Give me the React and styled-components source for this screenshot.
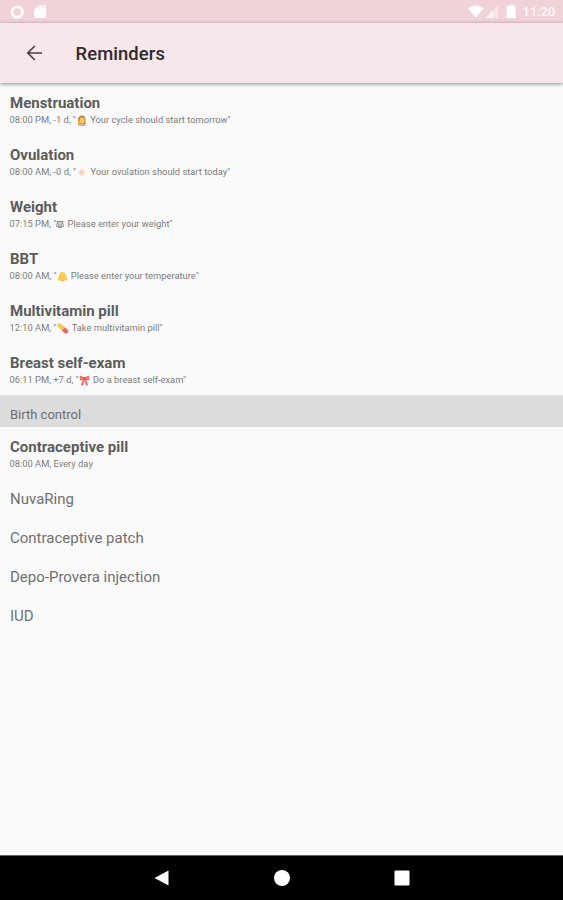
import React from "react";
import styled, { createGlobalStyle } from "styled-components";

const GlobalStyle = createGlobalStyle`
  *, *::before, *::after { box-sizing: border-box; }
  body { margin: 0; background: #fafafa; }
`;

const Screen = styled.div`
  display: flex;
  flex-direction: column;
  width: 563px;
  height: 900px;
  overflow: hidden;
  background: #fafafa;
  font-family: Roboto, "Liberation Sans", sans-serif;
`;

const StatusBar = styled.header`
  display: flex;
  justify-content: space-between;
  flex: none;
  height: 23px;
  padding: 0 8px 0 10px;
  background: #f0d2d8;
  color: #fff;
`;

const StatusGroup = styled.div`
  display: flex;
  align-items: center;
  svg { display: block; }
`;

const Clock = styled.span`
  margin-left: 6px;
  font-size: 13px;
  line-height: 24px;
  letter-spacing: -0.1px;
  font-weight: 500;
  padding-top: 1px;
  opacity: 0.85;
`;

const AppBar = styled.div`
  display: flex;
  align-items: center;
  flex: none;
  height: 60px;
  padding-left: 24px;
  background: #f8e7ea;
  box-shadow: 0 1px 4px rgba(0, 0, 0, 0.45);
  z-index: 1;
`;

const PageTitle = styled.h1`
  margin: 1px 0 0 31.5px;
  font-size: 18.4px;
  line-height: 24px;
  font-weight: 500;
  letter-spacing: 0.1px;
  color: #30292d;
`;

const List = styled.main`
  flex: 1;
  min-height: 0;
`;

const Reminder = styled.div`
  height: 52px;
  padding: 11px 10px 0;
`;

const Name = styled.div`
  font-size: 15px;
  line-height: 18px;
  font-weight: ${(p) => (p.$active ? 700 : 400)};
  color: ${(p) => (p.$active ? "#5c5c5c" : "#707070")};
  white-space: nowrap;
`;

const Details = styled.div`
  display: flex;
  align-items: center;
  height: 12px;
  margin: 2px 0 0 -0.5px;
  font-size: 9.35px;
  line-height: 12px;
  color: #7c7c7c;
  white-space: pre;
  svg { display: block; flex: none; margin-right: 1px; }
`;

const Section = styled.div`
  height: 32px;
  padding: 10px 10px 0;
  background: #dcdcdc;
  font-size: 13px;
  line-height: 19px;
  color: #6c6c6c;
`;

const Option = styled.div`
  display: flex;
  align-items: center;
  height: 39px;
  padding: 0 10px;
`;

const NavBar = styled.nav`
  display: flex;
  justify-content: center;
  align-items: center;
  gap: 104px;
  flex: none;
  height: 45px;
  background: #000;
  border-top: 1px solid #666;
  svg { display: block; }
`;

const Woman = () => (
  <svg width="11" height="11" viewBox="0 0 22 22">
    <path d="M4 20V10C4 4 7 1 12 1s7 4 7 9v8l-4 2z" fill="#b98543" />
    <ellipse cx="12" cy="11" rx="5" ry="6" fill="#f9cd5b" />
    <path d="M6 22c0-4 3-5 6-5s7 1 7 5z" fill="#e5a6a0" />
    <path d="M3 13l3-2 2 6-3 3z" fill="#f2b85c" />
  </svg>
);

const Flower = () => (
  <svg width="11" height="11" viewBox="0 0 22 22">
    <g fill="#fae5d8">
      <circle cx="11" cy="7" r="4" />
      <circle cx="15" cy="11" r="4" />
      <circle cx="11" cy="15" r="4" />
      <circle cx="7" cy="11" r="4" />
    </g>
    <circle cx="11" cy="11" r="3.5" fill="#f6cfa9" />
  </svg>
);

const Scales = () => (
  <svg width="8" height="9" viewBox="0 0 16 18" fill="none" stroke="#777" strokeWidth="1.5">
    <path d="M1 3h14M8 2v13M4 15h8M3 3L1 13h5L3 3M13 3l-3 10h5z" />
  </svg>
);

const Bell = () => (
  <svg width="11" height="11" viewBox="0 0 22 22">
    <path d="M11 2c-5 0-7 4-7 8l-3 7v2h20v-2l-3-7c0-4-2-8-7-8z" fill="#fbcb55" />
    <path d="M7 18h8l-2 3H9z" fill="#efb33f" />
  </svg>
);

const Pill = () => (
  <svg width="12" height="11" viewBox="0 0 24 22">
    <path d="M5 5l7 6" stroke="#f8cd5c" strokeWidth="9" strokeLinecap="round" />
    <path d="M14 13l4 3.5" stroke="#e56b6b" strokeWidth="9" strokeLinecap="round" />
    <path d="M11 10l2 2" stroke="#f8cd5c" strokeWidth="9" />
  </svg>
);

const Ribbon = () => (
  <svg width="11" height="11" viewBox="0 0 24 22" preserveAspectRatio="none" fill="#f0706c">
    <path d="M12 5L3 1C1 3 1 9 3 11l5-1-4 10 5 1 3-10 3 10 5-1-4-10 5 1c2-2 2-8 0-10z" />
    <rect x="9.5" y="4" width="5" height="6" rx="2" fill="#d8505a" />
  </svg>
);

const reminders = [
  { name: "Menstruation", before: "08:00 PM, -1 d, \"", Icon: Woman, after: " Your cycle should start tomorrow\"" },
  { name: "Ovulation", before: "08:00 AM, -0 d, \"", Icon: Flower, after: " Your ovulation should start today\"" },
  { name: "Weight", before: "07:15 PM, \"", Icon: Scales, after: " Please enter your weight\"" },
  { name: "BBT", before: "08:00 AM, \"", Icon: Bell, after: " Please enter your temperature\"" },
  { name: "Multivitamin pill", before: "12:10 AM, \"", Icon: Pill, after: " Take multivitamin pill\"" },
  { name: "Breast self-exam", before: "06:11 PM, +7 d, \"", Icon: Ribbon, after: " Do a breast self-exam\"" },
];

const options = ["NuvaRing", "Contraceptive patch", "Depo-Provera injection", "IUD"];

export default function App() {
  return (
    <>
      <GlobalStyle />
      <Screen>
        <StatusBar>
          <StatusGroup>
            <svg width="38" height="23" viewBox="0 0 38 23">
              <circle cx="7.2" cy="12" r="5.2" fill="none" stroke="#fff" strokeWidth="2.8" />
              <path d="M29 5.3h6a1 1 0 0 1 1 1V17a1 1 0 0 1-1 1H25.2a1 1 0 0 1-1-1v-7z" fill="#fff" />
              <path d="M29.5 6v2.5M31.8 6v2.5M34 6v2.5" stroke="#f0d2d8" strokeWidth="0.8" />
            </svg>
          </StatusGroup>
          <StatusGroup>
            <svg width="50" height="23" viewBox="0 0 50 23" fill="#fff">
              <path d="M1 8.2Q9 2.8 16.5 8.2L8.8 18z" />
              <path d="M31 5.5V18H18.5z" opacity="0.4" />
              <path d="M26 10.5V18h-7.5z" opacity="0.8" />
              <path d="M39.5 6H42V4.8h4V6h2.5v12.3h-9z" />
            </svg>
            <Clock>11:20</Clock>
          </StatusGroup>
        </StatusBar>
        <AppBar>
          <svg width="20" height="20" viewBox="0 0 20 20" fill="none" stroke="#4a4246" strokeWidth="1.7">
            <path d="M18 10H4M10.8 3L3.8 10l7 7" />
          </svg>
          <PageTitle>Reminders</PageTitle>
        </AppBar>
        <List>
          {reminders.map(({ name, before, Icon, after }) => (
            <Reminder key={name}>
              <Name $active>{name}</Name>
              <Details>
                <span>{before}</span>
                <Icon />
                <span>{after}</span>
              </Details>
            </Reminder>
          ))}
          <Section>Birth control</Section>
          <Reminder>
            <Name $active>Contraceptive pill</Name>
            <Details>08:00 AM, Every day</Details>
          </Reminder>
          {options.map((name) => (
            <Option key={name}>
              <Name>{name}</Name>
            </Option>
          ))}
        </List>
        <NavBar>
          <svg width="16" height="16" viewBox="0 0 16 16" fill="#fff">
            <path d="M.5 8L14.5.5v15z" />
          </svg>
          <svg width="16" height="16" viewBox="0 0 16 16" fill="#fff">
            <circle cx="8" cy="8" r="8" />
          </svg>
          <svg width="16" height="16" viewBox="0 0 16 16" fill="#fff">
            <rect x=".5" y=".5" width="15" height="15" rx="1" />
          </svg>
        </NavBar>
      </Screen>
    </>
  );
}
